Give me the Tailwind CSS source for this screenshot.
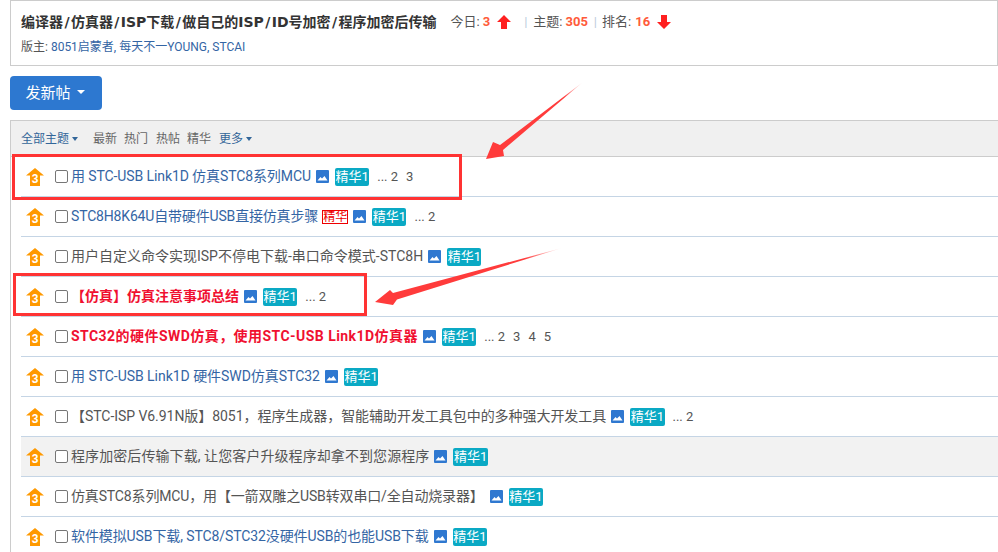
<!DOCTYPE html>
<html lang="en">
<head>
    <meta charset="UTF-8">
    <meta name="viewport" content="width=device-width, initial-scale=1.0">
    <title>Forum</title>
    <script src="https://cdn.jsdelivr.net/npm/@tailwindcss/browser@4"></script>
</head>
<body class="bg-white">
<svg class="hidden">
    <symbol id="top3" viewBox="0 0 18 18"><path d="M9 0 L18 7.5 L14 7.5 L14 18 L4 18 L4 7.5 L0 7.5 Z" fill="#ff9900"/><text x="9" y="15" text-anchor="middle" font-size="12" font-weight="bold" fill="#fff" font-family="Liberation Sans, sans-serif">3</text></symbol>
    <symbol id="pic" viewBox="0 0 13 13"><rect width="13" height="13" rx="1" fill="#2f78d0"/><path d="M1.5 10.5 L4.5 7 L6 8.5 L8.5 6 L11.5 10.5 Z" fill="#fff"/></symbol>
</svg>
<div class="relative h-[552px] w-[998px] overflow-hidden font-['Roboto','Noto_Sans_CJK_SC',sans-serif] text-[14px] text-[#333]">
    <!-- forum header -->
    <div class="ml-[10px] h-[66px] border border-[#ccc] pl-[10px]">
        <div class="flex h-[42px] items-center">
            <span class="font-['DejaVu_Sans','Noto_Sans_CJK_SC',sans-serif] text-[14px] font-bold text-[#333]">编译器<span class="mx-[1.4px]">/</span>仿真器<span class="mx-[1.4px]">/</span>ISP下载<span class="mx-[1.4px]">/</span>做自己的ISP<span class="mx-[1.4px]">/</span>ID号加密<span class="mx-[1.4px]">/</span>程序加密后传输</span>
            <span class="ml-[14px] text-[13px] text-[#555]">今日:</span>
            <span class="ml-[3px] text-[13px] font-bold text-[#ff5b3a]">3</span>
            <svg class="ml-[7px]" width="14" height="14" viewBox="0 0 14 14"><path d="M7 0 L14 7 L10 7 L10 14 L4 14 L4 7 L0 7 Z" fill="#ff2020"/></svg>
            <span class="ml-[13px] text-[13px] text-[#bcd]">|</span>
            <span class="ml-[6px] text-[13px] text-[#555]">主题:</span>
            <span class="ml-[3px] text-[13px] font-bold text-[#ff5b3a]">305</span>
            <span class="ml-[6px] text-[13px] text-[#bcd]">|</span>
            <span class="ml-[5px] text-[13px] text-[#555]">排名:</span>
            <span class="ml-[4px] text-[13px] font-bold text-[#ff5b3a]">16</span>
            <svg class="ml-[7px]" width="14" height="14" viewBox="0 0 14 14"><path d="M7 14 L14 7 L10 7 L10 0 L4 0 L4 7 L0 7 Z" fill="#ff2020"/></svg>
        </div>
        <div class="text-[12px] leading-[8px] text-[#555]">版主: <span class="text-[#3465a4]">8051启蒙者, 每天不一YOUNG, STCAI</span></div>
    </div>

    <div class="ml-[10px] mt-[10px] flex h-[34px] w-[92px] items-center justify-center rounded-[4px] bg-[#2d78d0] pr-[2px] text-[15px] text-white">
        发新帖<span class="ml-[6px] mt-[-2px] border-x-[4px] border-t-[4px] border-x-transparent border-t-white"></span>
    </div>

    <!-- thread list -->
    <div class="ml-[10px] mt-[10px] border-l border-t border-[#ccc]">
        <div class="flex h-[36px] items-center border-b border-[#ccc] bg-[#f0f0f0] pl-[10px] text-[12px] text-[#369]">
            <span>全部主题</span><span class="ml-[3px] border-x-[3.5px] border-t-[4px] border-x-transparent border-t-[#369]"></span>
            <span class="ml-[15px] text-[#666]">最新</span>
            <span class="ml-[7px] text-[#666]">热门</span>
            <span class="ml-[8px] text-[#666]">热帖</span>
            <span class="ml-[7px] text-[#666]">精华</span>
            <span class="ml-[8px] text-[#369]">更多</span><span class="ml-[3px] border-x-[3.5px] border-t-[4px] border-x-transparent border-t-[#369]"></span>
        </div>

        <div class="ml-[10px] flex h-[40px] items-center border-b border-[#c5d5e5]">
            <svg class="ml-[5px] shrink-0" width="18" height="18"><use href="#top3"/></svg>
            <input type="checkbox" class="ml-[11px] h-[13px] w-[13px] shrink-0 appearance-none rounded-[2px] border border-[#767676]">
            <span class="ml-[3px] tracking-[-0.1px] text-[#3465a4]">用 STC-USB Link1D 仿真STC8系列MCU</span>
            <svg class="ml-[5px]" width="13" height="13"><use href="#pic"/></svg>
            <span class="ml-[6px] h-[18px] rounded-[2px] bg-[#0aa9c4] px-[0.5px] text-[13px] leading-[18px] text-white">精华1</span>
            <span class="ml-[8px] text-[13px] text-[#555]">... 2<span class="ml-[8px]">3</span></span>
        </div>

        <div class="ml-[10px] flex h-[40px] items-center border-b border-[#c5d5e5]">
            <svg class="ml-[5px] shrink-0" width="18" height="18"><use href="#top3"/></svg>
            <input type="checkbox" class="ml-[11px] h-[13px] w-[13px] shrink-0 appearance-none rounded-[2px] border border-[#767676]">
            <span class="ml-[3px] tracking-[-0.17px] text-[#3465a4]">STC8H8K64U自带硬件USB直接仿真步骤</span>
            <span class="ml-[4px] border border-[#e00] text-[12px] leading-[12px] text-[#e00]">精华</span>
            <svg class="ml-[5px]" width="13" height="13"><use href="#pic"/></svg>
            <span class="ml-[6px] h-[18px] rounded-[2px] bg-[#0aa9c4] px-[0.5px] text-[13px] leading-[18px] text-white">精华1</span>
            <span class="ml-[8px] text-[13px] text-[#555]">... 2</span>
        </div>

        <div class="ml-[10px] flex h-[40px] items-center border-b border-[#c5d5e5]">
            <svg class="ml-[5px] shrink-0" width="18" height="18"><use href="#top3"/></svg>
            <input type="checkbox" class="ml-[11px] h-[13px] w-[13px] shrink-0 appearance-none rounded-[2px] border border-[#767676]">
            <span class="ml-[3px] text-[#555]">用户自定义命令实现ISP不停电下载-串口命令模式-STC8H</span>
            <svg class="ml-[5px]" width="13" height="13"><use href="#pic"/></svg>
            <span class="ml-[6px] h-[18px] rounded-[2px] bg-[#0aa9c4] px-[0.5px] text-[13px] leading-[18px] text-white">精华1</span>
        </div>

        <div class="ml-[10px] flex h-[40px] items-center border-b border-[#c5d5e5]">
            <svg class="ml-[5px] shrink-0" width="18" height="18"><use href="#top3"/></svg>
            <input type="checkbox" class="ml-[11px] h-[13px] w-[13px] shrink-0 appearance-none rounded-[2px] border border-[#767676]">
            <span class="ml-[3px] font-bold text-[#f01030]">【仿真】仿真注意事项总结</span>
            <svg class="ml-[5px]" width="13" height="13"><use href="#pic"/></svg>
            <span class="ml-[6px] h-[18px] rounded-[2px] bg-[#0aa9c4] px-[0.5px] text-[13px] leading-[18px] text-white">精华1</span>
            <span class="ml-[8px] text-[13px] text-[#555]">... 2</span>
        </div>

        <div class="ml-[10px] flex h-[40px] items-center border-b border-[#c5d5e5]">
            <svg class="ml-[5px] shrink-0" width="18" height="18"><use href="#top3"/></svg>
            <input type="checkbox" class="ml-[11px] h-[13px] w-[13px] shrink-0 appearance-none rounded-[2px] border border-[#767676]">
            <span class="ml-[3px] font-bold tracking-[0.45px] text-[#f01030]">STC32的硬件SWD仿真，使用STC-USB Link1D仿真器</span>
            <svg class="ml-[5px]" width="13" height="13"><use href="#pic"/></svg>
            <span class="ml-[6px] h-[18px] rounded-[2px] bg-[#0aa9c4] px-[0.5px] text-[13px] leading-[18px] text-white">精华1</span>
            <span class="ml-[8px] text-[13px] text-[#555]">... 2<span class="ml-[8px]">3</span><span class="ml-[8px]">4</span><span class="ml-[8px]">5</span></span>
        </div>

        <div class="ml-[10px] flex h-[40px] items-center border-b border-[#c5d5e5]">
            <svg class="ml-[5px] shrink-0" width="18" height="18"><use href="#top3"/></svg>
            <input type="checkbox" class="ml-[11px] h-[13px] w-[13px] shrink-0 appearance-none rounded-[2px] border border-[#767676]">
            <span class="ml-[3px] tracking-[-0.04px] text-[#3465a4]">用 STC-USB Link1D 硬件SWD仿真STC32</span>
            <svg class="ml-[5px]" width="13" height="13"><use href="#pic"/></svg>
            <span class="ml-[6px] h-[18px] rounded-[2px] bg-[#0aa9c4] px-[0.5px] text-[13px] leading-[18px] text-white">精华1</span>
        </div>

        <div class="ml-[10px] flex h-[40px] items-center border-b border-[#c5d5e5]">
            <svg class="ml-[5px] shrink-0" width="18" height="18"><use href="#top3"/></svg>
            <input type="checkbox" class="ml-[11px] h-[13px] w-[13px] shrink-0 appearance-none rounded-[2px] border border-[#767676]">
            <span class="ml-[3px] tracking-[-0.05px] text-[#555]">【STC-ISP V6.91N版】8051，程序生成器，智能辅助开发工具包中的多种强大开发工具</span>
            <svg class="ml-[5px]" width="13" height="13"><use href="#pic"/></svg>
            <span class="ml-[6px] h-[18px] rounded-[2px] bg-[#0aa9c4] px-[0.5px] text-[13px] leading-[18px] text-white">精华1</span>
            <span class="ml-[8px] text-[13px] text-[#555]">... 2</span>
        </div>

        <div class="ml-[10px] flex h-[40px] items-center border-b border-[#c5d5e5] bg-[#f2f2f2]">
            <svg class="ml-[5px] shrink-0" width="18" height="18"><use href="#top3"/></svg>
            <input type="checkbox" class="ml-[11px] h-[13px] w-[13px] shrink-0 appearance-none rounded-[2px] border border-[#767676] bg-white">
            <span class="ml-[3px] tracking-[0.08px] text-[#555]">程序加密后传输下载, 让您客户升级程序却拿不到您源程序</span>
            <svg class="ml-[5px]" width="13" height="13"><use href="#pic"/></svg>
            <span class="ml-[6px] h-[18px] rounded-[2px] bg-[#0aa9c4] px-[0.5px] text-[13px] leading-[18px] text-white">精华1</span>
        </div>

        <div class="ml-[10px] flex h-[40px] items-center border-b border-[#c5d5e5]">
            <svg class="ml-[5px] shrink-0" width="18" height="18"><use href="#top3"/></svg>
            <input type="checkbox" class="ml-[11px] h-[13px] w-[13px] shrink-0 appearance-none rounded-[2px] border border-[#767676]">
            <span class="ml-[3px] tracking-[-0.15px] text-[#555]">仿真STC8系列MCU，用【一箭双雕之USB转双串口/全自动烧录器】</span>
            <svg class="ml-[6px]" width="13" height="13"><use href="#pic"/></svg>
            <span class="ml-[6px] h-[18px] rounded-[2px] bg-[#0aa9c4] px-[0.5px] text-[13px] leading-[18px] text-white">精华1</span>
        </div>

        <div class="ml-[10px] flex h-[40px] items-center border-b border-[#c5d5e5]">
            <svg class="ml-[5px] shrink-0" width="18" height="18"><use href="#top3"/></svg>
            <input type="checkbox" class="ml-[11px] h-[13px] w-[13px] shrink-0 appearance-none rounded-[2px] border border-[#767676]">
            <span class="ml-[3px] tracking-[-0.1px] text-[#3465a4]">软件模拟USB下载, STC8/STC32没硬件USB的也能USB下载</span>
            <svg class="ml-[5px]" width="13" height="13"><use href="#pic"/></svg>
            <span class="ml-[6px] h-[18px] rounded-[2px] bg-[#0aa9c4] px-[0.5px] text-[13px] leading-[18px] text-white">精华1</span>
        </div>
    </div>

    <!-- annotations drawn over the screenshot -->
    <div class="absolute left-[12px] top-[154px] h-[46px] w-[450px] border-[3px] border-[#ff3333]"></div>
    <div class="absolute left-[13px] top-[273px] h-[43px] w-[354px] border-[3px] border-[#ff3333]"></div>
    <svg class="absolute left-0 top-0" width="998" height="552">
        <defs>
            <linearGradient id="a1" x1="583" y1="82" x2="486" y2="159" gradientUnits="userSpaceOnUse"><stop offset="0" stop-color="#ff3b3b" stop-opacity="0"/><stop offset="0.2" stop-color="#ff3b3b"/></linearGradient>
            <linearGradient id="a2" x1="562" y1="248" x2="375" y2="302" gradientUnits="userSpaceOnUse"><stop offset="0" stop-color="#ff3b3b" stop-opacity="0"/><stop offset="0.2" stop-color="#ff3b3b"/></linearGradient>
        </defs>
        <path d="M583 82 L500 145 L493 142 L486 159 L504 156 L503 150 Z" fill="url(#a1)"/>
        <path d="M562 248 L393 293 L390 290 L375 302 L393 305 L397 299.5 Z" fill="url(#a2)"/>
    </svg>
</div>
</body>
</html>
